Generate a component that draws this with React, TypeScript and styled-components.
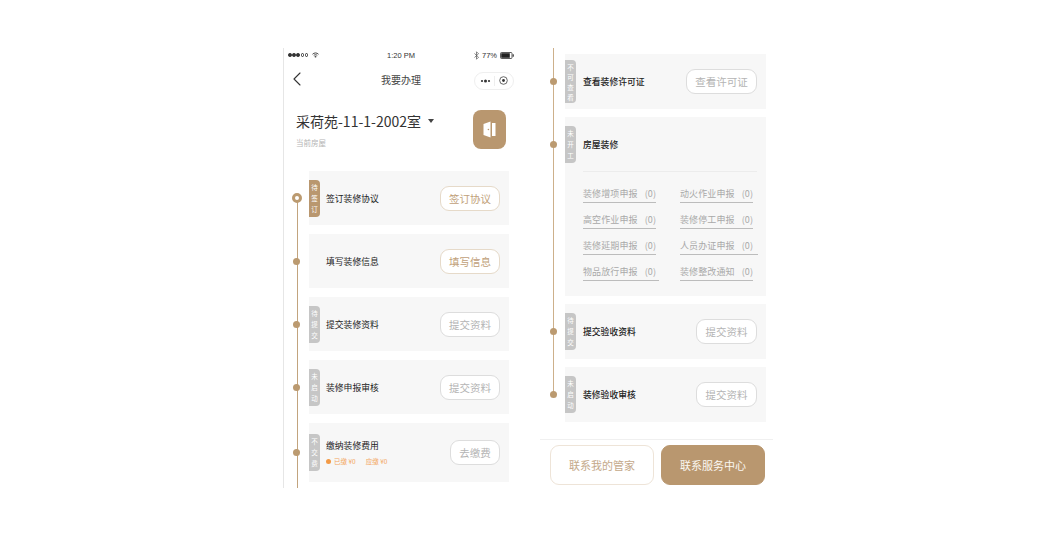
import React from "react";
import styled, { createGlobalStyle } from "styled-components";
import { ChevronLeft } from "lucide-react";

const Global = createGlobalStyle`
  html, body { margin: 0; padding: 0; background: #fff; }
  body { font-family: "Noto Sans CJK SC", "Noto Sans", sans-serif; color: #333; }
`;

const Page = styled.div`
  width: 1056px;
  height: 537px;
  box-sizing: border-box;
  padding: 48px 0 0 283px;
  display: flex;
  gap: 25px;
  overflow: hidden;
`;

const LeftPhone = styled.div`
  width: 232px;
  height: 440px;
  box-sizing: border-box;
  border-left: 1px solid #e6e6e6;
  display: flex;
  flex-direction: column;
  overflow: hidden;
`;

const RightPhone = styled.div`
  width: 233px;
  height: 440px;
  display: flex;
  flex-direction: column;
  overflow: hidden;
`;

const StatusBar = styled.div`
  height: 14px;
  display: grid;
  grid-template-columns: 1fr auto 1fr;
  align-items: center;
  padding: 0 1px 0 4px;
  font-family: "Liberation Sans", sans-serif;
  font-size: 7.5px;
  color: #333;
`;

const StatusLeft = styled.div`
  display: flex;
  align-items: center;
  gap: 0.7px;
`;

const SignalDot = styled.span<{ $on: boolean }>`
  width: 3.5px;
  height: 3.5px;
  box-sizing: border-box;
  border-radius: 50%;
  border: 0.5px solid #333;
  background: ${(p) => (p.$on ? "#333" : "transparent")};
`;

const WifiSlot = styled.span`
  display: flex;
  margin-left: 3px;
`;

const StatusRight = styled.div`
  display: flex;
  align-items: center;
  justify-content: flex-end;
  gap: 3px;
`;

const Nav = styled.div`
  height: 34px;
  display: grid;
  grid-template-columns: 1fr auto 1fr;
  align-items: center;
  padding: 0 1px;
`;

const BackIcon = styled(ChevronLeft)`
  display: block;
  width: 24px;
  height: 24px;
  color: #333;
`;

const NavTitle = styled.div`
  font-size: 10px;
  color: #444;
  padding-left: 3px;
`;

const Capsule = styled.div`
  justify-self: end;
  width: 40px;
  height: 18px;
  margin-top: 3px;
  box-sizing: border-box;
  border: 1px solid #efefef;
  border-radius: 9px;
  display: flex;
  align-items: center;
  justify-content: space-around;
  padding: 0 3px;
`;

const House = styled.div`
  height: 75px;
  padding: 14px 9px 0 12px;
  box-sizing: border-box;
  display: flex;
  justify-content: space-between;
  align-items: flex-start;
`;

const HouseText = styled.div`
  padding-top: 1px;
`;

const HouseName = styled.div`
  display: flex;
  align-items: center;
  gap: 7px;
  font-size: 14px;
  line-height: 20px;
  color: #333;
`;

const Caret = styled.span`
  width: 0;
  height: 0;
  border-left: 3.5px solid transparent;
  border-right: 3.5px solid transparent;
  border-top: 4px solid #444;
`;

const HouseHint = styled.div`
  font-size: 7.5px;
  line-height: 12px;
  margin-top: 6px;
  color: #b5b5b5;
`;

const DoorBadge = styled.div`
  width: 33px;
  height: 39px;
  border-radius: 8px;
  background: #b9976f;
  display: flex;
  align-items: center;
  justify-content: center;
`;

const Timeline = styled.div<{ $gap: number }>`
  position: relative;
  display: flex;
  flex-direction: column;
  gap: ${(p) => p.$gap}px;
`;

const LeftTimeline = styled(Timeline)`
  padding-bottom: 6px;
  &::before {
    content: "";
    position: absolute;
    left: 12.5px;
    top: 28px;
    bottom: 0;
    width: 1px;
    background: #c2a47e;
  }
`;

const RightTimeline = styled(Timeline)`
  padding-top: 6px;
  &::before {
    content: "";
    position: absolute;
    left: 13px;
    top: 0;
    bottom: 28px;
    width: 1px;
    background: #cdb08b;
  }
`;

const Row = styled.div<{ $height: number }>`
  display: flex;
  height: ${(p) => p.$height}px;
`;

const Rail = styled.div<{ $height: number }>`
  position: relative;
  z-index: 1;
  width: 25px;
  flex: none;
  box-sizing: border-box;
  height: ${(p) => p.$height}px;
  display: flex;
  align-items: center;
  justify-content: center;
`;

const RightRail = styled(Rail)`
  padding-left: 2px;
`;

const Dot = styled.span`
  width: 7px;
  height: 7px;
  border-radius: 50%;
  background: #bb9a70;
`;

const Ring = styled.span`
  width: 10px;
  height: 10px;
  box-sizing: border-box;
  border-radius: 50%;
  background: #fff;
  border: 3px solid #bb9a70;
`;

const Card = styled.div<{ $width: number }>`
  width: ${(p) => p.$width}px;
  background: #f7f7f7;
`;

const CardHead = styled.div<{ $height: number; $pad: number }>`
  height: ${(p) => p.$height}px;
  display: grid;
  grid-template-columns: 11px 1fr auto;
  column-gap: ${(p) => p.$pad}px;
  align-items: center;
  padding-right: 9px;
`;

const Tag = styled.div<{ $active?: boolean; $blank?: boolean }>`
  width: 11px;
  min-height: 37px;
  box-sizing: border-box;
  display: flex;
  align-items: center;
  justify-content: center;
  text-align: center;
  word-break: break-all;
  font-size: 6.5px;
  line-height: 11px;
  color: #fff;
  border-radius: 0 4px 4px 0;
  background: ${(p) => (p.$blank ? "transparent" : p.$active ? "#b9976f" : "#c6c6c6")};
`;

const TagWide = styled(Tag)`
  min-height: 43px;
  line-height: 10px;
`;

const TitleBlock = styled.div`
  display: flex;
  flex-direction: column;
`;

const Title = styled.div<{ $strong?: boolean }>`
  font-size: 8.8px;
  line-height: 13px;
  color: #222;
  font-weight: ${(p) => (p.$strong ? 500 : 400)};
`;

const Fees = styled.div`
  display: flex;
  align-items: center;
  margin-top: 4px;
  font-size: 6.5px;
  line-height: 10px;
  color: #f3a55c;
`;

const FeeDot = styled.span`
  width: 5px;
  height: 5px;
  border-radius: 50%;
  background: #f39a45;
  margin-right: 3px;
`;

const FeeLabel = styled.span`
  margin-right: 10px;
`;

const ActionButton = styled.div<{ $gold?: boolean; $w: number }>`
  width: ${(p) => p.$w}px;
  height: 25px;
  box-sizing: border-box;
  border-radius: 9px;
  background: #fff;
  display: flex;
  align-items: center;
  justify-content: center;
  font-size: 10.5px;
  border: 1px solid ${(p) => (p.$gold ? "#e6dac9" : "#dddddd")};
  color: ${(p) => (p.$gold ? "#bf9f79" : "#b4b4b4")};
`;

const Divider = styled.div`
  height: 1px;
  background: #ececec;
  margin: -1px 9px 0 18px;
`;

const LinkGrid = styled.div`
  display: grid;
  grid-template-columns: 97px 1fr;
  grid-auto-rows: 26px;
  padding: 14px 0 0 18px;
`;

const LinkCell = styled.div`
  display: flex;
  align-items: flex-start;
`;

const ReportLink = styled.span<{ $extra?: number }>`
  display: inline-block;
  font-size: 9px;
  line-height: 15px;
  height: 16px;
  word-spacing: 5px;
  letter-spacing: 0.1px;
  color: #a9a9a9;
  border-bottom: 1px solid #bcbcbc;
  padding-right: ${(p) => p.$extra ?? 0}px;
`;

const Footer = styled.div`
  margin-top: 17px;
  border-top: 1px solid #f0f0f0;
  padding: 5px 8px 0 10px;
  display: flex;
  gap: 7px;
`;

const FooterButton = styled.div<{ $solid?: boolean }>`
  width: 104px;
  height: 40px;
  box-sizing: border-box;
  border-radius: 9px;
  display: flex;
  align-items: center;
  justify-content: center;
  font-size: 11px;
  background: ${(p) => (p.$solid ? "#b9976f" : "#fff")};
  color: ${(p) => (p.$solid ? "#fbf7f2" : "#c4a98a")};
  border: 1px solid ${(p) => (p.$solid ? "#b9976f" : "#eee4d8")};
`;

const Wifi = () => (
  <svg width="7" height="6" viewBox="0 0 14 12" fill="none" stroke="#333" strokeWidth="1.8">
    <path d="M1 4.5C4.5 1 9.5 1 13 4.5" />
    <path d="M3.5 7C5.5 5 8.5 5 10.5 7" />
    <path d="M5.8 9.3C6.5 8.6 7.5 8.6 8.2 9.3L7 10.6Z" fill="#333" />
  </svg>
);

const Bluetooth = () => (
  <svg width="5" height="9" viewBox="0 0 10 18" fill="none" stroke="#555" strokeWidth="1.4">
    <path d="M1 5L9 12.5L5 16.5V1.5L9 5.5L1 13" />
  </svg>
);

const Battery = () => (
  <svg width="14" height="7" viewBox="0 0 14 7">
    <rect x="0.5" y="0.5" width="11.5" height="6" rx="1" fill="none" stroke="#333" strokeWidth="0.8" />
    <rect x="1.2" y="1.2" width="8.6" height="4.6" fill="#222" />
    <rect x="12.6" y="2.3" width="1.2" height="2.4" fill="#333" />
  </svg>
);

const MoreDots = () => (
  <svg width="11" height="4" viewBox="0 0 11 4">
    <circle cx="2" cy="2" r="1.1" fill="#333" />
    <circle cx="5.5" cy="2" r="1.5" fill="#333" />
    <circle cx="9" cy="2" r="1.1" fill="#333" />
  </svg>
);

const Target = () => (
  <svg width="9" height="9" viewBox="0 0 9 9">
    <circle cx="4.5" cy="4.5" r="3.8" fill="none" stroke="#444" strokeWidth="0.8" />
    <circle cx="4.5" cy="4.5" r="1.4" fill="#333" />
  </svg>
);

const CapsuleRule = styled.span`
  width: 1px;
  height: 10px;
  background: #eee;
`;

const DoorIcon = () => (
  <svg width="13" height="17" viewBox="0 0 13 17">
    <path d="M0.5 3L7.5 0.5V16.5L0.5 14Z" fill="#fff" />
    <rect x="9" y="2" width="3.5" height="13" fill="#fff" />
    <circle cx="5.4" cy="8.5" r="0.8" fill="#b9976f" />
  </svg>
);

type Step = {
  tag?: string;
  active?: boolean;
  title: string;
  action: string;
  gold?: boolean;
  ring?: boolean;
};

const leftSteps: Step[] = [
  { tag: "待签订", active: true, title: "签订装修协议", action: "签订协议", gold: true, ring: true },
  { title: "填写装修信息", action: "填写信息", gold: true },
  { tag: "待提交", title: "提交装修资料", action: "提交资料" },
  { tag: "未启动", title: "装修申报审核", action: "提交资料" },
];

const links: { label: string; extra?: number }[] = [
  { label: "装修增项申报 (0)" },
  { label: "动火作业申报 (0)" },
  { label: "高空作业申报 (0)" },
  { label: "装修停工申报 (0)" },
  { label: "装修延期申报 (0)" },
  { label: "人员办证申报 (0)", extra: 5 },
  { label: "物品放行申报 (0)", extra: 3 },
  { label: "装修整改通知 (0)" },
];

export default function App() {
  return (
    <>
      <Global />
      <Page>
        <LeftPhone>
          <StatusBar>
            <StatusLeft>
              {[true, true, true, false, false].map((on, i) => (
                <SignalDot key={i} $on={on} />
              ))}
              <WifiSlot>
                <Wifi />
              </WifiSlot>
            </StatusLeft>
            <div>1:20 PM</div>
            <StatusRight>
              <Bluetooth />
              <span>77%</span>
              <Battery />
            </StatusRight>
          </StatusBar>
          <Nav>
            <BackIcon strokeWidth={1.1} />
            <NavTitle>我要办理</NavTitle>
            <Capsule>
              <MoreDots />
              <CapsuleRule />
              <Target />
            </Capsule>
          </Nav>
          <House>
            <HouseText>
              <HouseName>
                采荷苑-11-1-2002室
                <Caret />
              </HouseName>
              <HouseHint>当前房屋</HouseHint>
            </HouseText>
            <DoorBadge>
              <DoorIcon />
            </DoorBadge>
          </House>
          <LeftTimeline $gap={9}>
            {leftSteps.map((s) => (
              <Row key={s.title} $height={54}>
                <Rail $height={54}>{s.ring ? <Ring /> : <Dot />}</Rail>
                <Card $width={200}>
                  <CardHead $height={54} $pad={6}>
                    <Tag $active={s.active} $blank={!s.tag}>{s.tag}</Tag>
                    <Title>{s.title}</Title>
                    <ActionButton $w={60} $gold={s.gold}>{s.action}</ActionButton>
                  </CardHead>
                </Card>
              </Row>
            ))}
            <Row $height={59}>
              <Rail $height={59}>
                <Dot />
              </Rail>
              <Card $width={200}>
                <CardHead $height={59} $pad={6}>
                  <Tag>不交费</Tag>
                  <TitleBlock>
                    <Title>缴纳装修费用</Title>
                    <Fees>
                      <FeeDot />
                      <FeeLabel>已缴 ¥0</FeeLabel>
                      <span>应缴 ¥0</span>
                    </Fees>
                  </TitleBlock>
                  <ActionButton $w={50}>去缴费</ActionButton>
                </CardHead>
              </Card>
            </Row>
          </LeftTimeline>
        </LeftPhone>

        <RightPhone>
          <RightTimeline $gap={8}>
            <Row $height={55}>
              <RightRail $height={55}>
                <Dot />
              </RightRail>
              <Card $width={201}>
                <CardHead $height={55} $pad={7}>
                  <TagWide>不可查看</TagWide>
                  <Title $strong>查看装修许可证</Title>
                  <ActionButton $w={71}>查看许可证</ActionButton>
                </CardHead>
              </Card>
            </Row>
            <Row $height={179}>
              <RightRail $height={55}>
                <Dot />
              </RightRail>
              <Card $width={201}>
                <CardHead $height={55} $pad={7}>
                  <Tag>未开工</Tag>
                  <Title $strong>房屋装修</Title>
                </CardHead>
                <Divider />
                <LinkGrid>
                  {links.map((l) => (
                    <LinkCell key={l.label}>
                      <ReportLink $extra={l.extra}>{l.label}</ReportLink>
                    </LinkCell>
                  ))}
                </LinkGrid>
              </Card>
            </Row>
            <Row $height={55}>
              <RightRail $height={55}>
                <Dot />
              </RightRail>
              <Card $width={201}>
                <CardHead $height={55} $pad={7}>
                  <Tag>待提交</Tag>
                  <Title $strong>提交验收资料</Title>
                  <ActionButton $w={61}>提交资料</ActionButton>
                </CardHead>
              </Card>
            </Row>
            <Row $height={55}>
              <RightRail $height={55}>
                <Dot />
              </RightRail>
              <Card $width={201}>
                <CardHead $height={55} $pad={7}>
                  <Tag>未启动</Tag>
                  <Title $strong>装修验收审核</Title>
                  <ActionButton $w={61}>提交资料</ActionButton>
                </CardHead>
              </Card>
            </Row>
          </RightTimeline>
          <Footer>
            <FooterButton>联系我的管家</FooterButton>
            <FooterButton $solid>联系服务中心</FooterButton>
          </Footer>
        </RightPhone>
      </Page>
    </>
  );
}
